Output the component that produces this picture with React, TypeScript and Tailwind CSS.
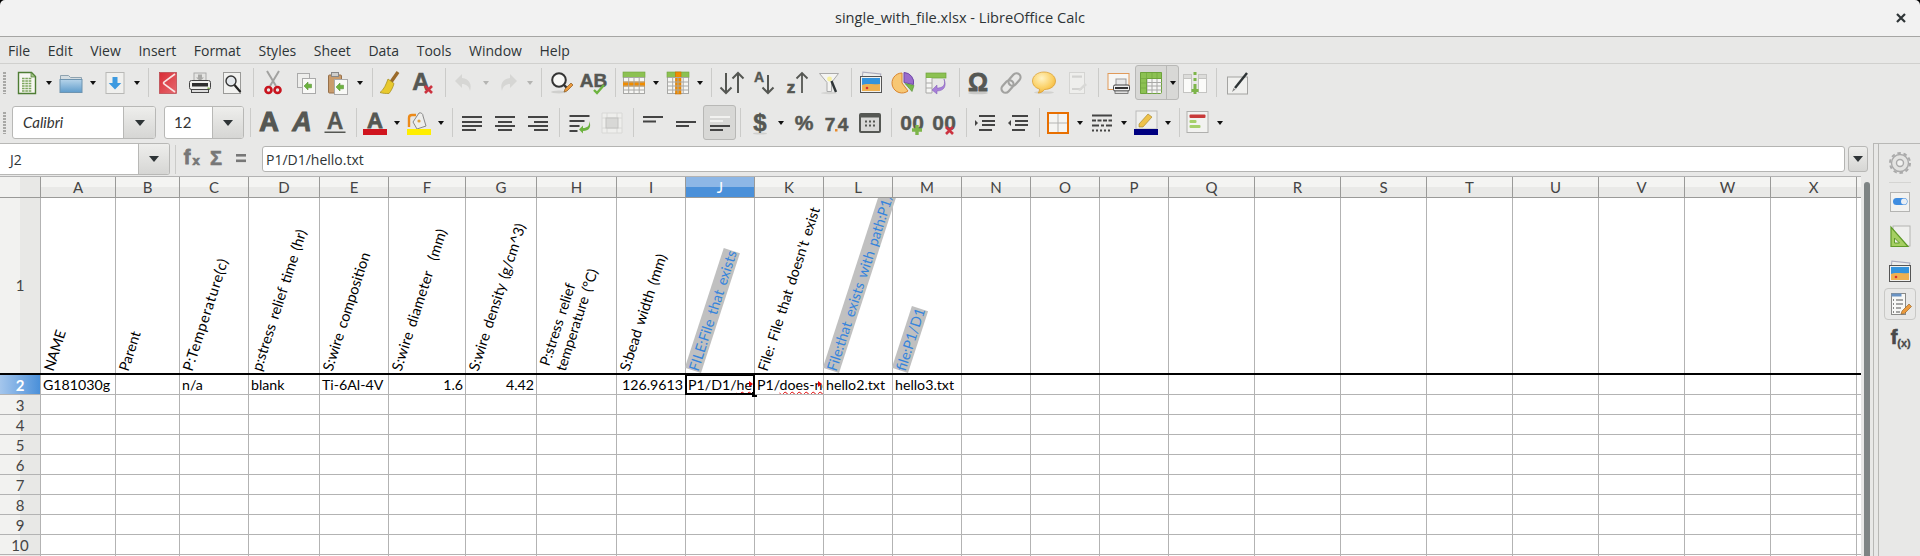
import React from "react";

const G = "#555753";

const I = ({ children, w = 24 }: { children?: React.ReactNode; w?: number }) => (
  <svg width={w} height="24" viewBox={`0 0 ${w} 24`} className="block overflow-visible">
    {children}
  </svg>
);

const L = ({ x = 12, y = 19, s = 22, c = G, t, i, k = 0.6 }: { x?: number; y?: number; s?: number; c?: string; t: string; i?: boolean; k?: number }) => (
  <text x={x} y={y} fontSize={s} fontFamily="Liberation Sans, sans-serif" fontWeight="700" fontStyle={i ? "italic" : "normal"} textAnchor="middle" fill={c} stroke={c} strokeWidth={k}>
    {t}
  </text>
);

const GreenArrow = ({ x = 0, y = 0 }: { x?: number; y?: number }) => (
  <path transform={`translate(${x} ${y})`} d="M0 4l4-4v2.2h3.5v3.6H4V8z" fill="#6db33f" stroke="#4e8a2a" strokeWidth=".5" />
);

const RedX = ({ x = 0, y = 0 }: { x?: number; y?: number }) => (
  <path transform={`translate(${x} ${y})`} d="M1 1l7 7M8 1L1 8" stroke="#cc3340" strokeWidth="2.6" />
);

const TableGrid = ({ children }: { children?: React.ReactNode }) => (
  <I>
    <rect x="1.5" y="1.5" width="21" height="21" fill="#f6f6f4" stroke="#a8a8a6" />
    {children}
    <path d="M6.7 6v16.5M12 6v16.5M17.2 6v16.5M1.5 6.5h21M1.5 11h21M1.5 15h21M1.5 19h21" stroke="#a8a8a6" fill="none" />
  </I>
);

const greenTop = <rect x="1" y="1" width="22" height="5.5" fill="#8cc152" stroke="#6ea33c" strokeWidth=".6" />;

const alignLines = (x: number[], y: number[], w: number[]) => (
  <I>
    {y.map((yy, i) => (
      <rect key={i} x={x[i]} y={yy} width={w[i]} height="2" fill="#444" />
    ))}
  </I>
);

const printerSmall = (
  <g>
    <rect x="9" y="8" width="10" height="7" fill="#e8e8e8" stroke="#999" />
    <rect x="6.5" y="14" width="16" height="6" rx="1.5" fill="#efefef" stroke="#444" />
    <rect x="8" y="16" width="13" height="2" fill="#333" />
    <rect x="8" y="20" width="13" height="2.5" fill="#ddd" stroke="#555" strokeWidth=".7" />
  </g>
);

const icons = {
  newDoc: (
    <I>
      <path d="M3.5 1.5h13l4 4v17h-17z" fill="#f7f7f2" stroke="#4e7d34" strokeWidth="1.4" />
      <path d="M16 1.5v4.5h4.5z" fill="#a5c887" stroke="#4e7d34" strokeWidth=".7" />
      <path d="M7 7.5h10M7 10h10M7 12.5h10M7 15h10M7 17.5h10M7 20h10" stroke="#7da65e" strokeWidth="1.5" strokeDasharray="2.6 .7" />
    </I>
  ),
  folder: (
    <I>
      <defs>
        <linearGradient id="fold" x1="0" y1="0" x2="0" y2="1">
          <stop offset="0" stopColor="#b6d4ea" />
          <stop offset="1" stopColor="#5f9ccb" />
        </linearGradient>
      </defs>
      <path d="M1.5 4.5h8l2 2h11v4h-21z" fill="#d4dde2" stroke="#8fa3b0" />
      <rect x="1" y="8.5" width="22" height="13" fill="url(#fold)" stroke="#6e94b0" />
    </I>
  ),
  save: (
    <I>
      <rect x="3" y="1.5" width="18" height="21" fill="#f0f0ee" stroke="#b8b8b6" />
      <path d="M9.5 6h5v6h3.8L12 18.5 5.7 12h3.8z" fill="#3d9ae0" />
    </I>
  ),
  pdf: (
    <I>
      <defs>
        <linearGradient id="pdf" x1="0" y1="0" x2="1" y2="1">
          <stop offset="0" stopColor="#d92b35" />
          <stop offset="1" stopColor="#e66a70" />
        </linearGradient>
      </defs>
      <rect x="3.5" y="1.5" width="17" height="21" fill="url(#pdf)" stroke="#b5444a" strokeWidth=".7" />
      <path d="M19 3L8 11q-1 1 0 2l11 8" fill="none" stroke="#f8e4e4" strokeWidth="1.6" />
    </I>
  ),
  print: (
    <I>
      <rect x="6" y="2" width="12" height="9" fill="#e4e4e2" stroke="#aaa" />
      <path d="M10 3.5h4v3h2L12 10 8 6.500h2z" fill="#a8a8a6" />
      <rect x="1.5" y="9.500" width="21" height="9" rx="2" fill="#eeeeec" stroke="#444" />
      <rect x="4" y="12" width="16" height="3.500" fill="#2e2e2e" />
      <rect x="3.5" y="18.500" width="17" height="3" fill="#ddd" stroke="#444" />
      <rect x="19.500" y="16.500" width="2" height="1.500" fill="#7fb24a" />
    </I>
  ),
  preview: (
    <I>
      <rect x="3.5" y="1.5" width="17" height="21" fill="#f2f2f0" stroke="#9a9a98" />
      <circle cx="11" cy="10" r="5" fill="#e4e8ec" stroke="#333" strokeWidth="1.4" />
      <path d="M14.500 14l6 7" stroke="#222" strokeWidth="2.2" />
    </I>
  ),
  cut: (
    <I>
      <path d="M6 0l9 15M18 0L9 15" stroke="#a2a2a0" strokeWidth="2" />
      <circle cx="7.500" cy="19" r="3" fill="none" stroke="#c8141e" strokeWidth="2.6" />
      <circle cx="16.500" cy="19" r="3" fill="none" stroke="#c8141e" strokeWidth="2.6" />
    </I>
  ),
  copy: (
    <I>
      <rect x="3.5" y="2.5" width="12" height="14" fill="#eeeeec" stroke="#aaa" />
      <rect x="8.500" y="7.500" width="13" height="15" fill="#f9f9f7" stroke="#aaa" />
      <GreenArrow x={10} y={11} />
    </I>
  ),
  paste: (
    <I>
      <rect x="2.500" y="4" width="13" height="18" rx="1" fill="#c99c6c" stroke="#96704a" />
      <rect x="5.500" y="1.500" width="7" height="4" fill="#cfcfcd" stroke="#888" />
      <rect x="8.500" y="8.500" width="13" height="15" fill="#f9f9f7" stroke="#aaa" />
      <GreenArrow x={10} y={12} />
    </I>
  ),
  broom: (
    <I>
      <path d="M20 1l-7 10" stroke="#9a6a2a" strokeWidth="3.4" />
      <path d="M10 8l6 4.500c-1 4-3 7.500-5 10-3 0-6 0-9-1 4-3 6-8 8-13.500z" fill="#e8c92e" stroke="#a99222" strokeWidth=".8" />
    </I>
  ),
  clear: (
    <I>
      <L x={10} y={19} s={24} t="A" />
      <RedX x={13} y={14} />
    </I>
  ),
  undo: (
    <I>
      <path d="M10 3L3 10l7 7v-4c4 0 7 2 8 7 2-6 0-12-8-13z" fill="#d6d6d4" />
    </I>
  ),
  redo: (
    <I>
      <path d="M14 3l7 7-7 7v-4c-4 0-7 2-8 7-2-6 0-12 8-13z" fill="#d6d6d4" />
    </I>
  ),
  find: (
    <I>
      <ellipse cx="9" cy="21" rx="8" ry="1.500" fill="#cfcfcd" />
      <circle cx="9" cy="9" r="6.800" fill="#f8f8f6" stroke="#333" strokeWidth="2" />
      <path d="M14 14l3 3" stroke="#333" strokeWidth="2.400" />
      <path d="M14 21l1-3 6-6 2 2-6 6z" fill="#ec9a3c" stroke="#8a5a20" strokeWidth=".7" />
    </I>
  ),
  spell: (
    <I>
      <L x={11.500} y={16} s={19} t="AB" k={0.5} />
      <path d="M12 19l3 3 7-8" fill="none" stroke="#6db33f" strokeWidth="2.400" />
    </I>
  ),
  rowTable: (
    <TableGrid>
      {greenTop}
      <rect x="1" y="10.500" width="22" height="5" fill="#f08c00" />
    </TableGrid>
  ),
  colTable: (
    <TableGrid>
      {greenTop}
      <rect x="9.500" y="1" width="5.500" height="22" fill="#f08c00" stroke="#c87000" strokeWidth=".6" />
    </TableGrid>
  ),
  sort: (
    <I>
      <path d="M6 2v20M0.500 16.500L6 22l5.500-5.500M18 22V2M12.500 7.500L18 2l5.500 5.500" fill="none" stroke={G} strokeWidth="2" />
    </I>
  ),
  sortAsc: (
    <I>
      <L x={6} y={11} s={14} t="A" k={0.4} />
      <path d="M15 4v18M9.500 16.500L15 22l5.500-5.500" fill="none" stroke={G} strokeWidth="2" />
    </I>
  ),
  sortDesc: (
    <I>
      <L x={5} y={22} s={17} t="z" k={0.7} />
      <path d="M16 22V2M10.500 7.500L16 2l5.500 5.500" fill="none" stroke={G} strokeWidth="1.800" />
    </I>
  ),
  filter: (
    <I>
      <ellipse cx="11" cy="22" rx="8" ry="1.200" fill="#d4d4d2" />
      <path d="M1.500 2.500h19l-7 9v9h-4.500v-9z" fill="#f4f4f2" stroke="#aaa" />
      <circle cx="11.500" cy="8" r="2.400" fill="#f6f0a0" />
      <path d="M13.500 10l4.500 11" stroke="#2e3436" strokeWidth="2.400" />
    </I>
  ),
  image: (
    <I>
      <rect x="3" y="2" width="18" height="15" transform="rotate(6 12 10)" fill="#eeeeec" stroke="#aab" />
      <rect x="1.500" y="5.500" width="21" height="16" fill="#f2f2f0" stroke="#555" />
      <rect x="3" y="7" width="18" height="7" fill="#3493dc" />
      <path d="M3 14c5-2 10 0 18-1v7H3z" fill="#eeb050" />
      <circle cx="8" cy="17" r="1.300" fill="#d83030" />
    </I>
  ),
  chart: (
    <I>
      <path d="M10 2a10 10 0 1 0 6 18l-6-8z" fill="#f7c774" stroke="#d9852e" />
      <path d="M12 1.500a10 10 0 0 1 9.500 12l-9.500-2z" fill="#9a6ccc" stroke="#6f48a8" />
      <path d="M13 12.500l9 2-2 6z" fill="#79b84a" stroke="#4e8a2a" strokeWidth=".6" />
    </I>
  ),
  pivot: (
    <I>
      <rect x="2" y="2" width="20" height="5" fill="#8cc152" stroke="#6ea33c" strokeWidth=".7" />
      <path d="M2 7v15h6V7M2 12h6M2 17h6" fill="#f6f6f4" stroke="#a8a8a6" />
      <path d="M20 8c2 7-2 9-7 9v-3l-5 5 5 4v-3c7 0 10-5 7-12z" fill="#a77fd8" stroke="#7e58b4" strokeWidth=".5" />
    </I>
  ),
  omega: (
    <I>
      <ellipse cx="12" cy="22" rx="10" ry="1.300" fill="#c8c8c6" />
      <L y={20} s={25} t="Ω" k={0.8} />
    </I>
  ),
  link: (
    <I>
      <g fill="none" stroke="#a2a2a0" strokeWidth="2.200">
        <rect x="11.500" y="1.500" width="8" height="14" rx="4" transform="rotate(42 15.500 8.500)" />
        <rect x="4.500" y="8.500" width="8" height="14" rx="4" transform="rotate(42 8.500 15.500)" />
      </g>
    </I>
  ),
  comment: (
    <I>
      <defs>
        <radialGradient id="cm" cx=".4" cy=".3" r=".8">
          <stop offset="0" stopColor="#fff3c4" />
          <stop offset=".6" stopColor="#fbcf62" />
          <stop offset="1" stopColor="#eba72c" />
        </radialGradient>
      </defs>
      <ellipse cx="12" cy="21.500" rx="10" ry="1.300" fill="#d2d2d0" />
      <path d="M12 1C5.500 1 .5 5 .5 10c0 4 3 7 7 8 0 1.500-.5 3-1.500 4 3 0 5-1.500 6.500-3.500C18.500 18.500 23.500 15 23.500 10S18.500 1 12 1z" fill="url(#cm)" stroke="#d99a28" strokeWidth=".7" />
    </I>
  ),
  headerDoc: (
    <I>
      <rect x="4.500" y="1.500" width="15" height="21" fill="#eeeeec" stroke="#d4d4d2" />
      <rect x="7" y="4.500" width="10" height="2.200" fill="#d2d2d0" />
      <rect x="7" y="17" width="10" height="2" fill="#d2d2d0" />
      <path d="M13 19l7-7 2 2-7 6z" fill="#d8d8d6" />
    </I>
  ),
  printArea: (
    <I>
      <rect x="1" y="2.500" width="21" height="16" fill="#f6f6f4" stroke="#e09a5a" />
      {printerSmall}
    </I>
  ),
  freeze: (
    <I>
      <rect x="1.500" y="1.500" width="21" height="21" rx="1" fill="#f6f6f4" stroke="#6ea33c" />
      <path d="M8 8v14.500M13 8v14.500M18 8v14.500M8 11.500h14.500M8 15h14.500M8 19h14.500" stroke="#a8a8a6" />
      <path d="M1.500 1.500h21v6H7.500v15h-6z" fill="#8cc152" stroke="#6ea33c" />
      <path d="M7.500 1.500v6M13 1.500v6M18 1.500v6M1.500 7.500h6M1.500 12h6M1.500 17h6" stroke="#6ea33c" strokeWidth=".6" />
    </I>
  ),
  split: (
    <I>
      <rect x="0.500" y="3.500" width="8" height="18" fill="#fbfbf9" stroke="#c4c4c2" />
      <rect x="15.500" y="3.500" width="8" height="18" fill="#fbfbf9" stroke="#c4c4c2" />
      <rect x="0.500" y="3.500" width="8" height="4" fill="#dcdcda" stroke="#c4c4c2" />
      <rect x="15.500" y="3.500" width="8" height="4" fill="#dcdcda" stroke="#c4c4c2" />
      <path d="M12 1v3M12 7v3M12 13v3" stroke="#7db54a" strokeWidth="3" />
      <path d="M12 16v7M8.500 19.500h7" stroke="#7db54a" strokeWidth="3" />
    </I>
  ),
  draw: (
    <I>
      <rect x="1.500" y="6" width="20" height="17" fill="#f0f0ee" stroke="#a4a4a2" />
      <path d="M9 17L21 2" stroke="#2e3436" strokeWidth="2.400" />
      <path d="M6 21l1.500-4 2 1.500z" fill="#888" />
    </I>
  ),
  bold: (
    <I>
      <L y={20} s={27} t="A" k={1.2} />
    </I>
  ),
  italic: (
    <I>
      <L y={20} s={27} t="A" i k={0.8} />
    </I>
  ),
  underline: (
    <I>
      <L y={18} s={23} t="A" k={0.3} />
      <rect x="1.500" y="20.500" width="21" height="1.500" fill={G} />
    </I>
  ),
  fontColor: (
    <I>
      <L y={17} s={22} t="A" k={0.8} />
      <rect x="0" y="18" width="24" height="6" fill="#d0141e" />
    </I>
  ),
  highlight: (
    <I>
      <path d="M2 16V7q0-3 3-3h4" fill="none" stroke="#ec8a1a" strokeWidth="2.400" />
      <path d="M12 2a3 3 0 0 1 4 3l3 10-9 3-4-7z" fill="#eeeeec" stroke="#888" />
      <circle cx="12" cy="10" r="1.600" fill="#e0a040" />
      <rect x="0" y="18" width="24" height="6" fill="#ffee00" />
    </I>
  ),
  alignL: alignLines([2, 2, 2, 2], [5, 10, 14, 18], [20, 20, 20, 14]),
  alignC: alignLines([2, 5, 2, 5], [5, 10, 14, 18], [20, 14, 20, 14]),
  alignR: alignLines([2, 8, 2, 8], [5, 10, 14, 18], [20, 14, 20, 14]),
  wrap: (
    <I>
      <rect x="1.500" y="4" width="20" height="2" fill="#444" />
      <rect x="1.500" y="9" width="15" height="2" fill="#444" />
      <rect x="1.500" y="14" width="10" height="2" fill="#444" />
      <rect x="1.500" y="19" width="8" height="2" fill="#444" />
      <path d="M21 10c1 5-2 7-6 7v-2.500l-4 4 4 4V20c6 0 9-4 6-10z" fill="#6db33f" />
    </I>
  ),
  merge: (
    <I>
      <path d="M2 2h20v20H2zM2 7h20M2 17h20M7 2v20M17 2v20" fill="#eeeeec" stroke="#d8d8d6" />
      <rect x="6" y="7" width="12" height="10" fill="#d8d8d6" stroke="#c2c2c0" />
    </I>
  ),
  alignTop: alignLines([2, 2], [5, 9.500], [20, 13]),
  alignMid: alignLines([2, 2], [10, 14], [20, 13]),
  alignBot: (
    <I>
      <rect x="2" y="5" width="20" height="2" fill="#f2f2f0" />
      <rect x="2" y="9" width="13" height="2" fill="#f2f2f0" />
      <rect x="2" y="14" width="20" height="2" fill="#444" />
      <rect x="2" y="18" width="13" height="2" fill="#444" />
    </I>
  ),
  dollar: (
    <I>
      <ellipse cx="12" cy="22.500" rx="7" ry="1" fill="#cfcfcd" />
      <L y={20} s={24} t="$" k={0.5} />
    </I>
  ),
  percent: (
    <I>
      <L y={19} s={21} t="%" k={0.5} />
    </I>
  ),
  number: (
    <I>
      <L x={5} y={20} s={19} t="7" k={0.5} />
      <L x={18} y={20} s={19} t="4" k={0.5} />
      <rect x="10" y="18" width="2.500" height="2.500" fill="#e8892a" />
    </I>
  ),
  date: (
    <I>
      <rect x="2" y="3" width="20" height="18" rx="1" fill="#d8d8d6" stroke={G} strokeWidth="2" />
      <rect x="2" y="3" width="20" height="3.500" fill={G} />
      <path d="M7 9.500h2v2H7zM11 9.500h2v2h-2zM15 9.500h2v2h-2zM7 13.500h2v2H7zM11 13.500h2v2h-2zM15 13.500h2v2h-2z" fill={G} />
    </I>
  ),
  addDec: (
    <I>
      <L x={6} y={19} s={21} t="0" k={0.4} />
      <L x={18} y={19} s={21} t="0" k={0.4} />
      <path d="M17 14v10M12 19h10" stroke="#7db54a" strokeWidth="3.400" />
    </I>
  ),
  delDec: (
    <I>
      <L x={6} y={19} s={21} t="0" k={0.4} />
      <L x={18} y={19} s={21} t="0" k={0.4} />
      <RedX x={13} y={15} />
    </I>
  ),
  indent: (
    <I>
      <path d="M2 9l3 3-3 3z" fill="#444" />
      <path d="M6 5h16M9 10h13M9 14h13M6 19h13" stroke="#444" strokeWidth="2" />
    </I>
  ),
  outdent: (
    <I>
      <path d="M5 9l-3 3 3 3z" fill="#444" />
      <path d="M6 5h16M9 10h13M9 14h13M6 19h13" stroke="#444" strokeWidth="2" />
    </I>
  ),
  borders: (
    <I>
      <rect x="2" y="2" width="20" height="20" fill="#f4f4f2" stroke="#e86f00" strokeWidth="2" />
      <path d="M12 3v18M3 12h18" stroke="#b4b4b2" />
    </I>
  ),
  borderStyle: (
    <I>
      <path d="M2 4.500h20" stroke="#444" strokeWidth="2" />
      <path d="M2 9.500h20" stroke="#444" strokeWidth="2" strokeDasharray="4 1.500" />
      <path d="M2 14.500h20" stroke="#444" strokeWidth="2" strokeDasharray="7 2 3 2" />
      <path d="M2 19.500h20" stroke="#444" strokeWidth="2" strokeDasharray="2 2" />
    </I>
  ),
  borderColor: (
    <I>
      <rect x="2" y="0" width="21" height="18" fill="#efefed" stroke="#bbb" />
      <path d="M5 13l9-10 4 3-9 10-4 0z" fill="#eec24a" stroke="#a08020" strokeWidth=".6" />
      <rect x="0" y="18" width="24" height="6" fill="#000080" />
    </I>
  ),
  cond: (
    <I>
      <rect x="1" y="0.500" width="21" height="21" fill="#f2f2f0" stroke="#b0b0ae" />
      <rect x="3.500" y="3.500" width="16" height="3.500" rx="1" fill="#c83a3a" />
      <rect x="3.500" y="9" width="7" height="3" rx="1" fill="#a5d06a" />
      <rect x="3.500" y="14" width="11" height="3" rx="1" fill="#a5d06a" />
    </I>
  ),
  fx: (
    <I>
      <L x={8} y={18} s={20} t="f" c="#777" k={0.8} />
      <L x={17} y={19} s={13} t="x" c="#777" k={0.7} />
    </I>
  ),
  sum: (
    <I>
      <L y={19} s={20} t="Σ" c="#777" k={0.6} />
    </I>
  ),
  equals: (
    <I>
      <rect x="7" y="8" width="10" height="2.600" fill="#777" />
      <rect x="7" y="13.500" width="10" height="2.600" fill="#777" />
    </I>
  ),
  gear: (
    <I>
      <circle cx="12" cy="12" r="8.500" fill="#e4e4e2" stroke="#aaa" strokeWidth="1.400" />
      <circle cx="12" cy="12" r="10" fill="none" stroke="#aaa" strokeWidth="2" strokeDasharray="3.500 2.800" />
      <circle cx="12" cy="12" r="3.500" fill="#f2f2f0" stroke="#aaa" strokeWidth="1.400" />
    </I>
  ),
  toggle: (
    <I>
      <rect x="2.500" y="2.500" width="19" height="19" fill="#f2f2f0" stroke="#b4b4b2" />
      <rect x="5" y="8" width="14.500" height="7" rx="3.500" fill="#3f8de0" />
      <circle cx="16" cy="11.500" r="3" fill="#e8eef4" />
    </I>
  ),
  triangle: (
    <I>
      <rect x="5" y="1" width="17" height="20" fill="#efefed" stroke="#b4b4b2" />
      <path d="M3 2v19.500h17z" fill="#a5cf62" stroke="#5f9a28" strokeWidth="1.200" />
      <path d="M6.500 13v5h5z" fill="#efefed" stroke="#5f9a28" />
    </I>
  ),
  props: (
    <I>
      <rect x="3.500" y="1.500" width="14" height="21" fill="#f8f8f6" stroke="#8a8a88" />
      <rect x="3.500" y="1.500" width="10" height="3" fill="#6a93c4" />
      <path d="M8 8h7M8 12h7M8 16h5M8 20h4" stroke="#555" />
      <path d="M5 8h1M5 12h1M5 16h1M5 20h1" stroke="#888" strokeWidth="2" />
      <path d="M13 22l1-3 7-7 2.500 2.500-7 7z" fill="#ec9a3c" stroke="#8a5a20" strokeWidth=".6" />
    </I>
  ),
  funcs: (
    <I>
      <L x={6} y={17} s={20} t="f" k={0.7} c="#4a4a4a" />
      <L x={16} y={20} s={11} t="(x)" k={0.3} c="#4a4a4a" />
    </I>
  ),
};

const Btn = ({ icon, w = "w-[32px]", active = false }: { icon: React.ReactNode; w?: string; active?: boolean }) => (
  <div className={`${w} h-[35px] flex items-center justify-center shrink-0 rounded-[3px] ${active ? "bg-[#d8d8d6] border border-[#b8b8b6]" : ""}`}>
    {icon}
  </div>
);

const Arrow = ({ off = false }: { off?: boolean }) => (
  <div className="w-[12px] h-[35px] flex items-center justify-center shrink-0">
    <div className={`w-0 h-0 border-x-[3px] border-x-transparent border-t-[4px] ${off ? "border-t-[#b4b4b2]" : "border-t-[#111]"}`} />
  </div>
);

const Sep = ({ m }: { m: string }) => <div className={`w-px h-[29px] bg-[#cbcbc9] shrink-0 ${m}`} />;

const Grip = () => (
  <div className="w-[3px] ml-[3px] h-[22px] shrink-0 bg-[repeating-linear-gradient(to_bottom,#a8a8a6_0_2px,#e8e8e7_2px_3px)]" />
);

const ComboArrow = ({ w }: { w: string }) => (
  <div className={`${w} h-full shrink-0 flex items-center justify-center bg-gradient-to-b from-[#eeeeec] to-[#d6d6d4] border-l border-[#b8b8b6]`}>
    <div className="w-0 h-0 border-x-[5px] border-x-transparent border-t-[6px] border-t-[#2e3436]" />
  </div>
);

const cols = ["A", "B", "C", "D", "E", "F", "G", "H", "I", "J", "K", "L", "M", "N", "O", "P", "Q", "R", "S", "T", "U", "V", "W", "X"];
const gridCols =
  "grid grid-cols-[41px_75px_64px_69px_71px_69px_77px_71px_80px_69px_69px_69px_69px_69px_69px_69px_69px_86px_86px_86px_86px_86px_86px_86px_86px_4px]";

const rotated = "block shrink-0 whitespace-pre origin-bottom-left rotate-[-72deg] leading-[17px] [word-spacing:2px]";

const headers: { lines: string[]; link?: boolean; fit?: string }[] = [
  { lines: ["NAME"], fit: "text-[14.3px]" },
  { lines: ["Parent"], fit: "text-[14.3px]" },
  { lines: ["P:Temperature(c)"], fit: "text-[14.6px] tracking-[0.7px]" },
  { lines: ["p:stress relief time (hr)"], fit: "text-[14.6px]" },
  { lines: ["S:wire composition"], fit: "text-[14.6px]" },
  { lines: ["S:wire diameter  (mm)"], fit: "text-[14.6px] tracking-[0.2px]" },
  { lines: ["S:wire density (g/cm^3)"], fit: "text-[14.6px]" },
  { lines: ["P:stress relief", "temperature (°C)"], fit: "text-[14.3px]" },
  { lines: ["S:bead width (mm)"], fit: "text-[14.6px]" },
  { lines: ["FILE:File that exists"], link: true, fit: "text-[14.3px]" },
  { lines: ["File: File that doesn't exist"], fit: "text-[14.3px]" },
  { lines: ["File:that exists with path:P1/D1/hello2.txt"], link: true, fit: "text-[14.3px]" },
  { lines: ["file:P1/D1"], link: true, fit: "text-[14.3px]" },
];

const Row = ({ n }: { n: number }) => (
  <div className={`${gridCols} h-[20px]`}>
    <div className="flex items-center justify-center pt-[1px] text-[15px] leading-[18px] text-[#444] border-r border-b border-[#b3b3b3] bg-[linear-gradient(to_right,#f2f2f0_50%,#e8e8e6_50%)]">
      {n}
    </div>
    {cols.map((c) => (
      <div key={c} className="border-r border-b border-[#b3b3b3] bg-white" />
    ))}
    <div className="border-b border-[#b3b3b3] bg-white" />
  </div>
);

const Cell = ({ children, right }: { children?: React.ReactNode; right?: boolean }) => (
  <div className={`relative overflow-hidden whitespace-nowrap border-r border-b border-[#b3b3b3] bg-white text-[14.2px] leading-[19px] text-black px-[2px] ${right ? "text-right" : ""}`}>
    {children}
  </div>
);

const Clip = () => (
  <div className="absolute right-[1px] top-[6px] w-0 h-0 border-y-[3px] border-y-transparent border-l-[4px] border-l-[#e00000]" />
);

export default function App() {
  const uiFont = "font-['Open_Sans',sans-serif]";
  return (
    <div className={`w-[1920px] h-[556px] overflow-hidden bg-black ${uiFont} text-[#2e3436]`}>
      <div className="relative h-[37px] rounded-t-[5px] bg-[#f2f2f2] border-b border-[#a6a6a4] flex items-center justify-center text-[14.6px] font-medium">
        single_with_file.xlsx - LibreOffice Calc
        <svg width="10" height="10" viewBox="0 0 10 10" className="absolute right-[14px] top-[13px]">
          <path d="M1 1l8 8M9 1L1 9" stroke="#2e3436" strokeWidth="2.200" />
        </svg>
      </div>

      <div className="h-[27px] bg-[#e8e8e7] border-b border-[#d0d0ce] flex items-center pl-[8px] gap-[17.6px] text-[14px]">
        {["File", "Edit", "View", "Insert", "Format", "Styles", "Sheet", "Data", "Tools", "Window", "Help"].map((m) => (
          <span key={m}>{m}</span>
        ))}
      </div>

      <div className="h-[40px] bg-[#e8e8e7] flex items-center pb-[3px]">
        <Grip />
        <div className="w-[5px] shrink-0" />
        <Btn icon={icons.newDoc} />
        <Arrow />
        <Btn icon={icons.folder} />
        <Arrow />
        <Btn icon={icons.save} />
        <Arrow />
        <Sep m="ml-[5px] mr-[3px]" />
        <Btn icon={icons.pdf} />
        <Btn icon={icons.print} />
        <Btn icon={icons.preview} />
        <Sep m="ml-[5px] mr-[3px]" />
        <Btn icon={icons.cut} />
        <Btn icon={icons.copy} w="w-[33px]" />
        <Btn icon={icons.paste} />
        <Arrow />
        <Sep m="ml-[6px] mr-[1px]" />
        <Btn icon={icons.broom} />
        <Btn icon={icons.clear} w="w-[34px]" />
        <Sep m="ml-[5px] mr-[2px]" />
        <Btn icon={icons.undo} />
        <Arrow off />
        <Btn icon={icons.redo} />
        <Arrow off />
        <Sep m="ml-[5px] mr-[4px]" />
        <Btn icon={icons.find} />
        <Btn icon={icons.spell} />
        <Sep m="ml-[5px] mr-[2px]" />
        <Btn icon={icons.rowTable} />
        <Arrow />
        <Btn icon={icons.colTable} />
        <Arrow />
        <Sep m="ml-[5px] mr-[4px]" />
        <Btn icon={icons.sort} />
        <Btn icon={icons.sortAsc} w="w-[34px]" />
        <Btn icon={icons.sortDesc} />
        <Btn icon={icons.filter} />
        <Sep m="ml-[5px] mr-[3px]" />
        <Btn icon={icons.image} />
        <Btn icon={icons.chart} w="w-[33px]" />
        <Btn icon={icons.pivot} />
        <Sep m="ml-[7px] mr-[2px]" />
        <Btn icon={icons.omega} />
        <Btn icon={icons.link} w="w-[34px]" />
        <Btn icon={icons.comment} />
        <Btn icon={icons.headerDoc} w="w-[34px]" />
        <Sep m="ml-[4px] mr-[4px]" />
        <Btn icon={icons.printArea} />
        <div className="flex rounded-[3px] bg-[#d8d8d6] border border-[#b8b8b6] w-[44px] h-[35px] shrink-0">
          <div className="w-[31px] flex items-center justify-center border-r border-[#b8b8b6]">{icons.freeze}</div>
          <div className="flex-1 flex items-center justify-center">
            <div className="w-0 h-0 border-x-[3px] border-x-transparent border-t-[4px] border-t-[#111]" />
          </div>
        </div>
        <Btn icon={icons.split} />
        <Sep m="ml-[5px] mr-[5px]" />
        <Btn icon={icons.draw} />
      </div>

      <div className="h-[39px] bg-[#e8e8e7] flex items-start pt-[1px]">
        <div className="h-[35px] flex items-center shrink-0">
          <Grip />
        </div>
        <div className="w-[6px] shrink-0" />
        <div className="mt-[1px] w-[144px] h-[33px] shrink-0 flex items-center bg-white border border-[#b8b8b6] rounded-[3px] overflow-hidden">
          <span className="flex-1 pl-[10px] italic text-[15px] font-['Lato',sans-serif] text-[#333]">Calibri</span>
          <ComboArrow w="w-[32px]" />
        </div>
        <div className="mt-[1px] ml-[8px] w-[80px] h-[33px] shrink-0 flex items-center bg-white border border-[#b8b8b6] rounded-[3px] overflow-hidden">
          <span className="flex-1 pl-[9px] text-[15px] font-['Lato',sans-serif] text-[#333]">12</span>
          <ComboArrow w="w-[31px]" />
        </div>
        <div className="flex items-center h-[35px]">
          <Sep m="ml-[6px] mr-[2px]" />
          <Btn icon={icons.bold} />
          <Btn icon={icons.italic} w="w-[33px]" />
          <Btn icon={icons.underline} w="w-[33px]" />
          <Sep m="ml-[5px] mr-[2px]" />
          <Btn icon={icons.fontColor} />
          <Arrow />
          <Btn icon={icons.highlight} />
          <Arrow />
          <Sep m="ml-[5px] mr-[3px]" />
          <Btn icon={icons.alignL} />
          <Btn icon={icons.alignC} w="w-[33px]" />
          <Btn icon={icons.alignR} w="w-[33px]" />
          <Sep m="ml-[5px] mr-[4px]" />
          <Btn icon={icons.wrap} />
          <Btn icon={icons.merge} w="w-[31px]" />
          <Sep m="ml-[6px] mr-[3px]" />
          <Btn icon={icons.alignTop} />
          <Btn icon={icons.alignMid} w="w-[34px]" />
          <Btn icon={icons.alignBot} w="w-[33px]" active />
          <Sep m="ml-[4px] mr-[4px]" />
          <Btn icon={icons.dollar} w="w-[30px]" />
          <Arrow />
          <Btn icon={icons.percent} w="w-[34px]" />
          <Btn icon={icons.number} />
          <Btn icon={icons.date} w="w-[34px]" />
          <Sep m="ml-[4px] mr-[4px]" />
          <Btn icon={icons.addDec} />
          <Btn icon={icons.delDec} />
          <Sep m="ml-[6px] mr-[2px]" />
          <Btn icon={icons.indent} />
          <Btn icon={icons.outdent} w="w-[34px]" />
          <Sep m="ml-[4px] mr-[2px]" />
          <Btn icon={icons.borders} />
          <Arrow />
          <Btn icon={icons.borderStyle} />
          <Arrow />
          <Btn icon={icons.borderColor} />
          <Arrow />
          <Sep m="ml-[5px] mr-[2px]" />
          <Btn icon={icons.cond} />
          <Arrow />
        </div>
      </div>

      <div className="flex h-[413px] bg-[#e8e8e7]">
        <div className="w-[1873px] shrink-0">
          <div className="h-[33px] flex items-start">
            <div className="w-[170px] h-[32px] shrink-0 flex items-center bg-white border border-l-0 border-[#b8b8b6] rounded-r-[3px] overflow-hidden">
              <span className="flex-1 pl-[10px] text-[14px]">J2</span>
              <ComboArrow w="w-[31px]" />
            </div>
            <Sep m="ml-[5px] mr-[3px] mt-[2px]" />
            <div className="w-[24px] h-[30px] shrink-0 flex items-center justify-center">{icons.fx}</div>
            <div className="w-[25px] h-[30px] shrink-0 flex items-center justify-center">{icons.sum}</div>
            <div className="w-[25px] h-[30px] shrink-0 flex items-center justify-center">{icons.equals}</div>
            <div className="ml-[9px] mt-[3px] w-[1583px] h-[26px] shrink-0 bg-white border border-[#b4b4b2] rounded-[3px] flex items-center pl-[3px] text-[14px]">
              P1/D1/hello.txt
            </div>
            <div className="ml-[3px] mt-[3px] w-[20px] h-[26px] shrink-0 rounded-[3px] border border-[#b8b8b6] bg-gradient-to-b from-[#eeeeec] to-[#d6d6d4] flex items-center justify-center">
              <div className="w-0 h-0 border-x-[5px] border-x-transparent border-t-[6px] border-t-[#2e3436]" />
            </div>
          </div>

          <div className="flex font-['Lato',sans-serif]">
            <div className="w-[1861px] shrink-0">
              <div className={`${gridCols} h-[22px] border-t border-[#b3b3b3]`}>
                <div className="border-r border-b border-[#9a9a98] bg-[linear-gradient(to_right,#f2f2f0_50%,#e8e8e6_50%)]" />
                {cols.map((c) => (
                  <div
                    key={c}
                    className={`flex items-center justify-center text-[15px] leading-[20px] border-r border-b border-[#9a9a98] ${
                      c === "J"
                        ? "text-white bg-[linear-gradient(to_bottom,#8db7e6_50%,#4a90d9_50%)]"
                        : "text-[#444] bg-[linear-gradient(to_bottom,#f4f4f2_50%,#e9e9e7_50%)]"
                    }`}
                  >
                    {c}
                  </div>
                ))}
                <div className="border-b border-[#9a9a98] bg-[linear-gradient(to_bottom,#f4f4f2_50%,#e9e9e7_50%)]" />
              </div>

              <div className={`${gridCols} h-[177px] overflow-hidden border-b-2 border-black`}>
                <div className="flex items-center justify-center text-[15px] text-[#444] border-r border-[#b3b3b3] bg-[linear-gradient(to_right,#f2f2f0_50%,#e8e8e6_50%)]">
                  1
                </div>
                {cols.map((c, i) => {
                  const h = headers[i];
                  return (
                    <div key={c} className={`flex items-end border-r border-[#b3b3b3] bg-white text-black ${h && h.lines.length > 1 ? "pl-[31px]" : "pl-[15px]"}`}>
                      {h && (
                        <span className={`${rotated} ${h.fit} ${h.link ? "bg-[#c0c0c0] text-[#3584dc]" : ""}`}>
                          {h.lines.map((l) => (
                            <span key={l} className="block">
                              {l}
                            </span>
                          ))}
                        </span>
                      )}
                    </div>
                  );
                })}
                <div className="bg-white" />
              </div>

              <div className={`${gridCols} h-[20px]`}>
                <div className="flex items-center justify-center pt-[1px] text-[15px] leading-[18px] text-white border-r border-b border-[#b3b3b3] bg-gradient-to-r from-[#a4c6ec] to-[#4a90d9] font-bold">
                  2
                </div>
                <Cell>G181030g</Cell>
                <Cell />
                <Cell>n/a</Cell>
                <Cell>blank</Cell>
                <Cell>Ti-6Al-4V</Cell>
                <Cell right>1.6</Cell>
                <Cell right>4.42</Cell>
                <Cell />
                <Cell right>126.9613</Cell>
                <div className="relative border-r border-b border-[#b3b3b3] bg-white">
                  <div className="overflow-hidden whitespace-nowrap text-[14.2px] leading-[19px] text-black px-[2px] w-[66px]">
                    P1/D1/<span className="underline decoration-wavy decoration-[#e00000] decoration-1 underline-offset-[1px]">hello.txt</span>
                  </div>
                  <Clip />
                  <div className="absolute -left-[1px] -top-[1px] w-[70px] h-[21px] border-2 border-black" />
                  <div className="absolute -right-[3px] -bottom-[3px] w-[5px] h-[5px] bg-black" />
                </div>
                <Cell>
                  P1/<span className="underline decoration-wavy decoration-[#e00000] decoration-1 underline-offset-[1px]">does-not-exist.txt</span>
                  <Clip />
                </Cell>
                <Cell>hello2.txt</Cell>
                <Cell>hello3.txt</Cell>
                {cols.slice(13).map((c) => (
                  <Cell key={c} />
                ))}
                <div className="border-b border-[#b3b3b3] bg-white" />
              </div>

              {[3, 4, 5, 6, 7, 8, 9, 10, 11].map((n) => (
                <Row key={n} n={n} />
              ))}
            </div>
            <div className="w-[12px] shrink-0 pt-[6px] pl-[3px]">
              <div className="w-[6px] h-[400px] rounded-t-[3px] bg-[#7e8484]" />
            </div>
          </div>
        </div>

        <div className="w-[47px] shrink-0 flex border-l border-t border-[#b8b8b6]">
          <div className="w-[5px] border-r border-[#b8b8b6]" />
          <div className="flex-1 flex flex-col items-center pt-[7px]">
            {icons.gear}
            <div className="w-[22px] h-px bg-[#d4d4d2] mt-[7px] mb-[7px]" />
            {icons.toggle}
            <div className="h-[11px]" />
            {icons.triangle}
            <div className="h-[11px]" />
            {icons.image}
            <div className="mt-[4px] w-[32px] h-[32px] rounded-[4px] border border-[#c8c8c6] flex items-center justify-center">
              {icons.props}
            </div>
            <div className="h-[7px]" />
            {icons.funcs}
          </div>
        </div>
      </div>
    </div>
  );
}
